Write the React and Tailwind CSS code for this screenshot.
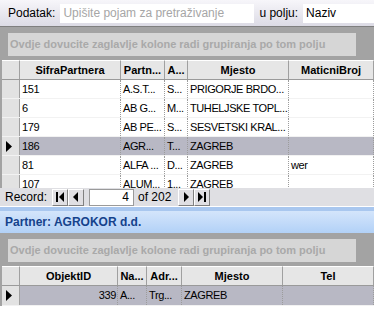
const topCols = [
  { key: "sifra", title: "SifraPartnera", w: "w-[101px]" },
  { key: "naziv", title: "Partn...", w: "w-[44px]" },
  { key: "adr", title: "A...", w: "w-[23px]" },
  { key: "mjesto", title: "Mjesto", w: "w-[101px]" },
  { key: "mb", title: "MaticniBroj", w: "flex-1" },
];

const topRows = [
  { sifra: "151", naziv: "A.S.T...", adr: "S...", mjesto: "PRIGORJE BRDO...", mb: "" },
  { sifra: "6", naziv: "AB G...", adr: "M...", mjesto: "TUHELJSKE TOPL...", mb: "" },
  { sifra: "179", naziv: "AB PE...", adr: "S...", mjesto: "SESVETSKI KRAL...", mb: "" },
  { sifra: "186", naziv: "AGR...", adr: "T...", mjesto: "ZAGREB", mb: "", sel: true },
  { sifra: "81", naziv: "ALFA ...", adr: "D...", mjesto: "ZAGREB", mb: "wer" },
  { sifra: "107", naziv: "ALUM...", adr: "1...", mjesto: "ZAGREB", mb: "" },
];

const botCols = [
  { key: "id", title: "ObjektID", w: "w-[98px]", right: true },
  { key: "naziv", title: "Na...", w: "w-[29px]" },
  { key: "adr", title: "Adr...", w: "w-[35px]" },
  { key: "mjesto", title: "Mjesto", w: "w-[101px]" },
  { key: "tel", title: "Tel", w: "flex-1" },
];

const botRows = [{ id: "339", naziv: "A...", adr: "Trg...", mjesto: "ZAGREB", tel: "", sel: true }];

function GroupPanel() {
  return (
    <div className="bg-[#a3a3a3] pt-[6px] pb-[4px] pl-[6px]">
      <div className="flex h-[23px] w-[348px] items-center bg-[#d6d6d6] pl-[2px] font-bold text-[#a9a9a9]">
        Ovdje dovucite zaglavlje kolone radi grupiranja po tom polju
      </div>
    </div>
  );
}

function Header({ cols }) {
  return (
    <div className="flex h-[20px] border-b border-[#9a9a9a] bg-[#e6e6e6]">
      <div className="w-[18px] shrink-0 border-r border-[#a0a0a0] border-t border-t-white bg-[#e2e2e2]" />
      {cols.map((c) => (
        <div
          key={c.key}
          className={`${c.w} flex shrink-0 items-center justify-center overflow-hidden whitespace-nowrap border-r border-[#a0a0a0] border-t border-t-white font-bold`}
        >
          {c.title}
        </div>
      ))}
    </div>
  );
}

function Row({ cols, row, h }) {
  return (
    <div className={`flex ${h} ${row.sel ? "bg-[#b8b8c4]" : "bg-white"} border-b border-[#f2f2f2]`}>
      <div className="flex w-[18px] shrink-0 items-center border-r border-[#a0a0a0] bg-[#e2e2e2] pl-[4px]">
        {row.sel && (
          <svg width="6" height="11" viewBox="0 0 6 11">
            <path d="M0 0 L6 5.5 L0 11 Z" fill="#000" />
          </svg>
        )}
      </div>
      {cols.map((c) => (
        <div
          key={c.key}
          className={`${c.w} flex shrink-0 items-center overflow-hidden whitespace-nowrap border-r border-dotted border-[#9c9c9c] tracking-[-0.4px] ${
            c.right ? "justify-end pr-[1px]" : "pl-[2px]"
          }`}
        >
          {row[c.key]}
        </div>
      ))}
    </div>
  );
}

function NavBtn({ children }) {
  return (
    <div className="flex h-[17px] w-[16px] items-center justify-center border border-t-white border-l-white border-r-[#808080] border-b-[#808080] bg-[#e0dfe3]">
      {children}
    </div>
  );
}

export default function App() {
  return (
    <div
      className="h-[319px] w-[374px] overflow-hidden bg-white text-[11px] text-black"
      style={{ fontFamily: '"Liberation Sans", Arial, sans-serif' }}
    >
      {/* search bar */}
      <div className="flex h-[26px] items-center bg-gradient-to-b from-[#f7f6fa] to-[#dcdbe5] text-[12px]">
        <span className="ml-[8px]">Podatak:</span>
        <div className="ml-[5px] flex h-[19px] w-[194px] items-center bg-white pl-[3px] text-[#a6a6a6]">
          Upišite pojam za pretraživanje
        </div>
        <span className="ml-[5px]">u polju:</span>
        <div className="ml-[5px] flex h-[19px] flex-1 items-center bg-white pl-[3px]">Naziv</div>
      </div>
      <div className="h-[1px] bg-[#7f7f7f]" />

      {/* partners grid */}
      <div className="border-l-2 border-[#a3a3a3]">
        <GroupPanel />
        <div className="h-[128px] overflow-hidden">
          <Header cols={topCols} />
          {topRows.map((r) => (
            <Row key={r.sifra} cols={topCols} row={r} h="h-[19px]" />
          ))}
        </div>
      </div>

      {/* record navigator */}
      <div className="flex h-[18px] items-center bg-[#dfdfe3] text-[12px]">
        <span className="ml-[5px] mr-[5px]">Record:</span>
        <NavBtn>
          <svg width="10" height="10" viewBox="0 0 10 10">
            <rect x="1" y="0" width="2" height="10" fill="#000" />
            <path d="M9 0 L4 5 L9 10 Z" fill="#000" />
          </svg>
        </NavBtn>
        <NavBtn>
          <svg width="8" height="10" viewBox="0 0 8 10">
            <path d="M6 0 L1 5 L6 10 Z" fill="#000" />
          </svg>
        </NavBtn>
        <div className="ml-[5px] flex h-[17px] w-[45px] items-center justify-end border border-[#9a9a9a] bg-white pr-[4px]">
          4
        </div>
        <span className="ml-[4px] mr-[7px]">of 202</span>
        <NavBtn>
          <svg width="8" height="10" viewBox="0 0 8 10">
            <path d="M2 0 L7 5 L2 10 Z" fill="#000" />
          </svg>
        </NavBtn>
        <NavBtn>
          <svg width="10" height="10" viewBox="0 0 10 10">
            <path d="M1 0 L6 5 L1 10 Z" fill="#000" />
            <rect x="7" y="0" width="2" height="10" fill="#000" />
          </svg>
        </NavBtn>
      </div>
      <div className="h-[1px] bg-white" />

      {/* detail header */}
      <div className="h-[4px] bg-[#a9c7ef]" />
      <div className="flex h-[22px] items-center bg-gradient-to-b from-[#d4e5fb] to-[#b2d1f7] pl-[5px] text-[12px] font-bold text-[#15428b]">
        Partner: AGROKOR d.d.
      </div>

      {/* objects grid */}
      <div className="border-l-2 border-[#a3a3a3]">
        <GroupPanel />
        <Header cols={botCols} />
        {botRows.map((r) => (
          <Row key={r.id} cols={botCols} row={r} h="h-[20px]" />
        ))}
      </div>
    </div>
  );
}
